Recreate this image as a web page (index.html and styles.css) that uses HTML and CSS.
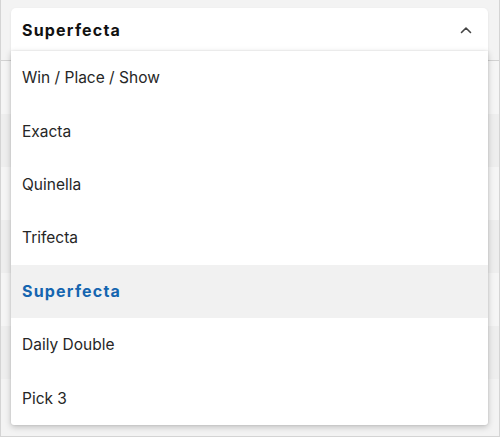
FILE: index.html
```html
<!DOCTYPE html>
<html>
<head>
<meta charset="utf-8">
<link rel="stylesheet" href="styles.css">
</head>
<body>
<div class="frame">
  <div class="backdrop">
    <div class="bg-row bg-head"></div>
    <div class="bg-row"></div>
    <div class="bg-row bg-dark"></div>
    <div class="bg-row"></div>
    <div class="bg-row bg-dark"></div>
    <div class="bg-row"></div>
    <div class="bg-row bg-dark"></div>
  </div>
  <div class="select">
    <div class="trigger">
      <span class="value">Superfecta</span>
      <svg class="chevron" width="12" height="8" viewBox="0 0 12 8"><path d="M1.5 6.5 L6 2 L10.5 6.5" fill="none" stroke="#444" stroke-width="1.6" stroke-linecap="round" stroke-linejoin="round"/></svg>
    </div>
    <ul class="menu">
      <li class="item">Win / Place / Show</li>
      <li class="item">Exacta</li>
      <li class="item">Quinella</li>
      <li class="item">Trifecta</li>
      <li class="item selected">Superfecta</li>
      <li class="item">Daily Double</li>
      <li class="item">Pick 3</li>
    </ul>
  </div>
</div>
</body>
</html>
```
FILE: styles.css
```css
* { box-sizing: border-box; }
html, body { margin: 0; padding: 0; }
body {
  width: 500px;
  height: 437px;
  background: #e9e9e9;
  font-family: Inter, "Noto Sans", sans-serif;
  overflow: hidden;
}
.frame {
  position: relative;
  width: 500px;
  height: 437px;
  border: 1px solid #d4d4d4;
  border-top: none;
  background: #f3f3f3;
  overflow: hidden;
}
.backdrop {
  position: absolute;
  inset: 0;
  display: flex;
  flex-direction: column;
}
.bg-row {
  height: 53px;
  background: #f5f5f5;
}
.bg-head {
  height: 61px;
  background: #f3f3f3;
  border-bottom: 1px solid #d2d2d2;
}
.bg-dark { background: #eeeeee; }
.select {
  position: absolute;
  left: 10px;
  top: 8px;
  width: 477px;
}
.trigger {
  height: 43px;
  background: #fff;
  border-radius: 5px 5px 0 0;
  display: flex;
  align-items: center;
  justify-content: space-between;
  padding: 0 16px 0 11px;
  box-shadow: 0 1px 3px rgba(0,0,0,0.08);
}
.value {
  font-size: 16px;
  font-weight: 700;
  color: #111;
  letter-spacing: 1.2px;
}
.chevron { display: block; }
.menu {
  list-style: none;
  margin: 0;
  padding: 0;
  background: #fff;
  box-shadow: 0 2px 6px rgba(0,0,0,0.22), 0 0 2px rgba(0,0,0,0.12);
  border-radius: 0 0 3px 3px;
}
.item {
  height: 53.4px;
  display: flex;
  align-items: center;
  padding-left: 11px;
  font-size: 15.5px;
  color: #262626;
}
.item.selected {
  background: #f1f1f1;
  color: #1565b0;
  font-weight: 700;
  font-size: 16px;
  letter-spacing: 1.2px;
}
```
